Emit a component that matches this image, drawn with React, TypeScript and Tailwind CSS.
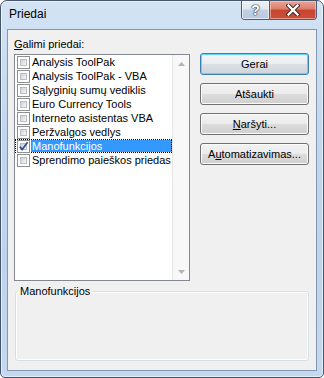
import React from 'react';

const items = [
  'Analysis ToolPak',
  'Analysis ToolPak - VBA',
  'Sąlyginių sumų vediklis',
  'Euro Currency Tools',
  'Interneto asistentas VBA',
  'Peržvalgos vedlys',
  'Manofunkcijos',
  'Sprendimo paieškos priedas',
];

const CheckBox: React.FC<{ checked: boolean }> = ({ checked }) => (
  <span className="relative flex h-[13px] w-[13px] shrink-0 border border-[#8e8f8f] bg-white p-[2px]">
    <span className="h-full w-full border border-[#b9bec4] bg-[linear-gradient(135deg,#cdd1d6_0%,#e4e6e9_55%,#f8f8f8_100%)]" />
    {checked && (
      <svg className="absolute left-[0px] top-[0px]" width="11" height="11" viewBox="0 0 11 11">
        <path d="M1.8 5.6 L4.2 8.6 L9.6 1.2" fill="none" stroke="#2f4f8f" strokeWidth="1.7" />
      </svg>
    )}
  </span>
);

const DialogButton: React.FC<{ children: React.ReactNode; isDefault?: boolean }> = ({ children, isDefault }) => (
  <button
    className={
      isDefault
        ? 'h-[22px] w-[109px] rounded-[3px] border border-[#3c7fb1] bg-[linear-gradient(180deg,#f2f5f7_0%,#eaeef1_50%,#dbe0e4_50%,#cfd5da_100%)] text-[11px] leading-[20px] text-black shadow-[inset_0_0_0_1px_#62d3f8]'
        : 'h-[22px] w-[109px] rounded-[3px] border border-[#707070] bg-[linear-gradient(180deg,#f2f2f2_0%,#ebebeb_50%,#dddddd_50%,#cfcfcf_100%)] text-[11px] leading-[20px] text-black shadow-[inset_0_0_0_1px_#fbfbfb]'
    }
  >
    {children}
  </button>
);

export default function App() {
  return (
    <div className="flex h-[378px] w-[324px] flex-col rounded-t-[7px] rounded-b-[5px] border border-[#46566a] bg-[linear-gradient(180deg,#d3e3f4_0%,#c1d7ee_35%,#bed4ec_70%,#c4d9ef_100%)] font-['Liberation_Sans',Arial,sans-serif] shadow-[inset_0_0_0_1px_rgba(255,255,255,0.55)]">
      {/* title bar */}
      <div className="flex h-[28px] shrink-0 items-start justify-between">
        <span className="pl-[8px] pt-[6px] text-[12px] leading-[15px] text-black">Priedai</span>
        <div className="mr-[6px] flex h-[19px] overflow-hidden rounded-b-[4px] border border-t-0 border-[#4b5d74]">
          <div className="flex w-[28px] items-center justify-center border-r border-[#4b5d74] bg-[linear-gradient(180deg,#edf2f8_0%,#dfe7f0_45%,#c3d1e2_50%,#b8cade_100%)] shadow-[inset_0_0_0_1px_rgba(255,255,255,0.6)]">
            <span className="text-[14px] font-bold leading-[16px] text-white [text-shadow:0_0_1px_#2b3a4e,0_0_1px_#2b3a4e,0_0_2px_#2b3a4e]">?</span>
          </div>
          <div className="flex w-[46px] items-center justify-center bg-[linear-gradient(180deg,#e9a597_0%,#dc7d6c_45%,#c9442f_50%,#c7513c_100%)] shadow-[inset_0_0_0_1px_rgba(255,220,210,0.5)]">
            <svg width="14" height="12" viewBox="0 0 14 12">
              <path d="M2.5 1.5 L11.5 10.5 M11.5 1.5 L2.5 10.5" stroke="#3a2420" strokeWidth="4.2" strokeLinecap="square" />
              <path d="M2.5 1.5 L11.5 10.5 M11.5 1.5 L2.5 10.5" stroke="#ffffff" strokeWidth="2.4" strokeLinecap="square" />
            </svg>
          </div>
        </div>
      </div>

      {/* client area */}
      <div className="mx-[6px] mb-[6px] flex flex-1 flex-col border border-[#8397b0] bg-[#f0f0f0] pl-[6px] text-[11px] text-black">
        <div className="flex">
          <div className="flex flex-col">
            <span className="pt-[8px] leading-[13px]">
              <span className="underline underline-offset-[1px]">G</span>alimi priedai:
            </span>
            <div className="mt-[3px] flex h-[227px] w-[176px] border border-[#828790] bg-white">
              <div className="flex flex-1 flex-col">
                {items.map((item, i) => (
                  <div
                    key={item}
                    className={
                      i === 6
                        ? 'flex h-[14px] items-center outline-1 outline-offset-[-1px] outline-dotted outline-black'
                        : 'flex h-[14px] items-center'
                    }
                  >
                    <span className="ml-[2px]">
                      <CheckBox checked={i === 6} />
                    </span>
                    <span
                      className={
                        i === 6
                          ? 'ml-[1px] h-[12px] flex-1 whitespace-nowrap bg-[#3399ff] pl-[1px] leading-[12px] text-white'
                          : 'ml-[1px] h-[12px] flex-1 whitespace-nowrap pl-[1px] leading-[12px]'
                      }
                    >
                      {item}
                    </span>
                  </div>
                ))}
              </div>
              <div className="flex w-[17px] flex-col justify-between border-l border-[#e6e6e6] bg-[#f8f8f8]">
                <div className="flex h-[17px] items-center justify-center">
                  <svg width="7" height="4" viewBox="0 0 7 4">
                    <path d="M0 4 L3.5 0 L7 4 Z" fill="#b3b3b3" />
                  </svg>
                </div>
                <div className="flex h-[17px] items-center justify-center">
                  <svg width="7" height="4" viewBox="0 0 7 4">
                    <path d="M0 0 L3.5 4 L7 0 Z" fill="#b3b3b3" />
                  </svg>
                </div>
              </div>
            </div>
          </div>

          <div className="ml-[10px] mt-[23px] flex flex-col gap-[8px]">
            <DialogButton isDefault>Gerai</DialogButton>
            <DialogButton>Atšaukti</DialogButton>
            <DialogButton>
              <span className="underline underline-offset-[1px]">N</span>aršyti...
            </DialogButton>
            <DialogButton>
              A<span className="underline underline-offset-[1px]">u</span>tomatizavimas...
            </DialogButton>
          </div>
        </div>

        <fieldset className="ml-[1px] mt-[4px] h-[76px] w-[294px] rounded-[3px] border border-[#d5dfe5] shadow-[inset_0_0_0_1px_#ffffff]">
          <legend className="ml-[2px] px-[2px] leading-[13px]">Manofunkcijos</legend>
        </fieldset>
      </div>
    </div>
  );
}
